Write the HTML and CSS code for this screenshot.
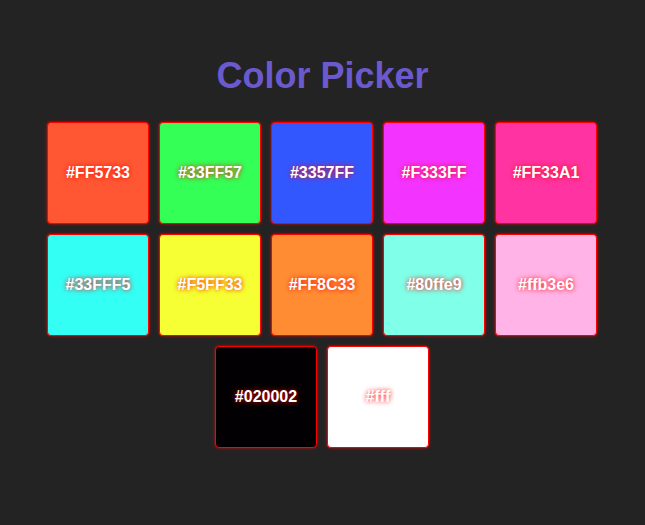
FILE: index.html
```html
<!DOCTYPE html>
<html>
<head>
<meta charset="utf-8">
<link rel="stylesheet" href="styles.css">
</head>
<body>
<h1 class="title">Color Picker</h1>
<div class="palette">
  <div class="swatch" style="background:#FF5733">#FF5733</div>
  <div class="swatch" style="background:#33FF57">#33FF57</div>
  <div class="swatch" style="background:#3357FF">#3357FF</div>
  <div class="swatch" style="background:#F333FF">#F333FF</div>
  <div class="swatch" style="background:#FF33A1">#FF33A1</div>
  <div class="swatch" style="background:#33FFF5">#33FFF5</div>
  <div class="swatch" style="background:#F5FF33">#F5FF33</div>
  <div class="swatch" style="background:#FF8C33">#FF8C33</div>
  <div class="swatch" style="background:#80ffe9">#80ffe9</div>
  <div class="swatch" style="background:#ffb3e6">#ffb3e6</div>
  <div class="swatch" style="background:#020002">#020002</div>
  <div class="swatch" style="background:#fff">#fff</div>
</div>
</body>
</html>
```
FILE: styles.css
```css
html, body {
  margin: 0;
  padding: 0;
  background: #232323;
}
body {
  padding: 55px 8px 0;
  font-family: "Liberation Sans", Arial, sans-serif;
}
.title {
  margin: 0 0 20px;
  text-align: center;
  font-size: 36px;
  font-weight: bold;
  color: #6a5acd;
}
.palette {
  display: flex;
  flex-wrap: wrap;
  justify-content: center;
  padding-right: 1px;
}
.swatch {
  width: 100px;
  height: 100px;
  margin: 5px;
  border: 1px solid #ff0000;
  border-radius: 4px;
  box-shadow: 0 0 3px rgba(255, 0, 0, 0.8);
  display: flex;
  align-items: center;
  justify-content: center;
  color: #fff;
  font-size: 16px;
  font-weight: bold;
  text-shadow: 0 0 5px #ff0000;
}
```
